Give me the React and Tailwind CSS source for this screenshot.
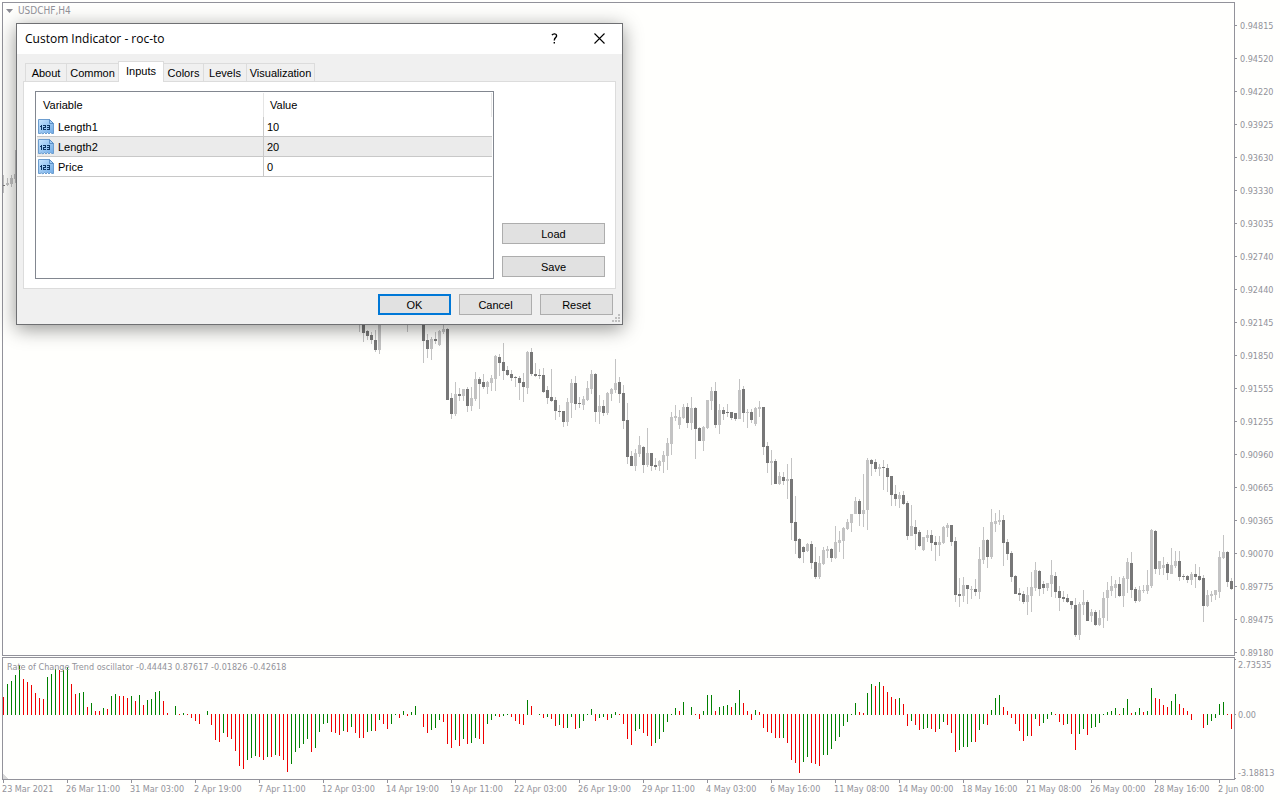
const CANDLES = `
3 175 185 186 193 d|7 178 183 185 186 l|11 175 178 184 187 l|15 150 174 179 183 l
359 318 320 325 332 d|363 318 320 333 342 d|367 330 331 336 340 d|371 332 335 340 344 d|375 330 340 350 352 d|379 318 320 350 354 l
407 318 320 322 332 l|423 318 320 341 363 d|427 334 340 349 358 d|431 337 339 349 360 l|435 332 339 341 344 d|439 330 331 345 346 l
443 324 329 332 334 l|447 328 329 400 400 d|451 393 398 414 419 d|455 382 394 414 416 l|459 388 394 396 401 d|463 389 389 396 401 l
467 387 389 406 412 d|471 387 398 406 411 l|475 372 379 399 401 l|479 377 379 384 409 d|483 374 382 387 389 d|487 381 382 387 394 l
491 375 378 383 391 l|495 355 356 379 391 l|499 354 357 363 376 d|503 343 362 371 380 d|507 366 370 375 376 d|511 370 374 378 381 d
515 376 377 378 387 d|519 376 378 383 400 d|523 373 382 387 402 d|527 351 352 388 394 l|531 348 352 374 376 d|535 363 374 376 377 d
539 369 375 376 379 d|543 368 375 392 393 d|547 386 390 398 404 d|551 369 397 401 402 d|555 397 400 411 420 d|559 405 411 412 417 d
563 411 411 422 427 d|567 398 402 422 426 l|571 379 383 403 418 l|575 376 383 404 410 d|579 397 403 404 408 d|583 396 399 405 410 l
587 381 388 400 401 l|591 370 374 389 394 l|595 373 374 412 422 d|599 395 406 412 424 l|603 400 406 413 416 d|607 392 393 413 415 l
611 388 389 394 401 l|615 359 383 390 393 l|619 377 382 394 403 d|623 385 393 421 429 d|627 403 420 457 464 d|631 451 456 466 466 d
635 449 453 466 471 l|639 436 445 454 457 l|643 446 447 465 473 d|647 428 453 465 467 l|651 453 453 466 471 d|655 458 465 467 470 d
659 460 461 466 471 l|663 451 455 462 473 l|667 438 443 456 470 l|671 412 417 444 455 l|675 405 416 418 421 l|679 410 417 425 429 l
683 404 407 418 419 l|687 403 407 423 428 d|691 397 408 423 430 l|695 407 408 429 459 d|699 427 428 441 441 d|703 426 427 441 451 l
707 400 400 428 429 l|711 387 391 401 410 l|715 382 391 425 428 d|719 404 410 425 434 l|723 407 410 414 420 d|727 404 412 413 417 d
731 412 412 418 420 d|735 413 413 419 421 d|739 379 390 419 419 l|743 386 389 413 422 d|747 409 412 413 428 l|751 409 412 420 423 d
755 407 408 424 426 l|759 401 407 409 417 l|763 407 407 447 455 d|767 442 446 463 473 d|771 450 461 463 485 l|775 459 461 484 484 d
779 472 476 484 485 l|783 472 477 481 485 d|787 464 479 481 499 l|791 458 479 523 540 d|795 496 522 541 554 d|799 538 539 558 559 d
803 546 547 552 563 d|807 543 544 551 552 l|811 541 544 563 569 d|815 547 562 577 579 d|819 556 563 577 579 l|823 547 550 564 565 l
827 546 549 551 558 l|831 548 549 558 562 d|835 526 542 558 559 l|839 531 540 543 552 l|843 527 528 541 559 l|847 519 522 529 530 l
851 514 514 523 532 l|855 497 501 514 514 l|859 499 501 514 526 d|863 474 510 514 527 l|867 458 460 510 530 l|871 459 460 464 476 d
875 459 462 469 472 d|879 464 467 469 476 l|883 460 467 468 490 d|887 464 468 477 492 d|891 476 476 495 506 d|895 485 494 499 506 d
899 492 495 499 508 l|903 491 495 504 505 d|907 501 503 536 540 d|911 505 526 536 536 l|915 520 527 534 550 d|919 530 532 546 547 d
923 537 537 550 551 l|927 530 535 538 542 l|931 530 535 543 551 d|935 536 542 545 561 d|939 536 542 545 556 l|943 526 527 543 544 l
947 523 525 528 537 l|951 525 525 542 546 d|955 537 541 595 602 d|959 578 594 596 607 d|963 577 585 596 602 l|967 585 585 589 604 d
971 586 589 590 599 l|975 579 589 592 596 d|979 547 559 592 599 l|983 527 540 560 564 l|987 539 540 557 568 d|991 509 522 557 559 l
995 513 521 524 532 l|999 510 520 522 525 l|1003 515 520 543 566 d|1007 539 542 554 560 d|1011 551 553 577 582 d|1015 575 576 594 594 d
1019 588 593 595 601 d|1023 591 594 602 604 d|1027 587 595 602 615 l|1031 572 587 596 612 l|1035 562 570 588 591 l|1039 570 571 589 596 d
1043 581 584 588 594 d|1047 583 583 588 591 l|1051 560 575 584 597 l|1055 572 576 592 598 d|1059 586 591 598 611 d|1063 591 597 599 602 d
1067 594 598 602 603 d|1071 601 601 605 609 d|1075 598 605 635 637 d|1079 602 604 635 640 l|1083 590 602 605 615 l|1087 600 602 621 621 d
1091 609 612 616 622 l|1095 610 612 625 626 d|1099 610 618 625 626 l|1103 592 598 618 628 l|1107 582 590 598 621 l|1111 576 586 591 596 l
1115 580 584 588 598 l|1119 577 584 596 597 d|1123 576 578 596 607 l|1127 558 562 579 593 l|1131 552 563 590 598 d|1135 587 589 601 603 d
1139 586 590 601 602 l|1143 585 590 591 593 l|1147 570 585 591 594 l|1151 529 530 586 588 l|1155 530 531 569 574 d|1159 561 561 569 575 l
1163 557 565 568 575 l|1167 562 564 573 580 d|1171 548 565 574 574 l|1175 551 561 566 568 l|1179 551 561 577 581 d|1183 574 576 577 580 d
1187 575 576 580 583 d|1191 572 574 580 585 l|1195 564 574 577 588 d|1199 567 576 580 581 d|1203 575 578 606 622 d|1207 590 595 606 607 l
1211 591 594 596 602 l|1215 590 590 595 600 l|1219 551 557 592 598 l|1223 535 552 558 559 l|1227 551 552 582 587 d|1231 578 581 589 590 d
`
  .trim()
  .split(/[|\n]/)
  .map((row) => {
    const [x, high, top, bottom, low, tone] = row.trim().split(" ");
    return { x: +x, high: +high, top: +top, bottom: +bottom, low: +low, dark: tone === "d" };
  });

// One entry per bar: the y of the bar's end and its colour, "-" for a gap.
const BARS = `
697R 684G 681G 675G 665G 679R 682R 685R 693R 698R 699R 677G 674G 669G 670R 670G 667G 684R 694R 693G
692G 707R 703G 711R 711R 708G 709R 696G 694G 696R 696R 698R 696G 701R 695G 705R 700G 699G 692G 691G
701R 713R - 706G 714R 713G 714R 718R 721R 724R - 711G 725R 740R 742R 733G 737R 739R 751R 766R
769R 760G 758G 756G 757R 760R 757G 757R 755G 756R 760R 772R 764G 752G 748G 744G 739G 752R 748G 732G
724G 723G 732R 733R 735R 731G 732R 727G 733R 738R 738R 732G 731G 731R 720G 724R 729R 724G 714G 718R
711G 716R 712G 706G - 727R 733R 730G 728G 720G 722R 744R 748R 740G 746R 739G 744R 743G 738G 739R
744R 724G 720G 716G 717R 716G 714G 717R 721R 724R 725R 700G 706R - 714G 718R 717G 719R 726R 725G
728R 728G 717G 729R 728G 721G 714G 709G 721R 718G 717G 720R 718G 712G 714R 724R 739R 745R 731G 729G
733R 736R 746R 743G 739G 732G 722G 714G 708G 711R 702G - 707G 714R 719R 711G 695G 695G 711R 707G
706G 705G 707R 703G 690G 703R 711R 720R 710G 712R 728R 732R 733R 738R 738R 738G 743R 760R 763R 773R
762G 757G 763R 764R 766R 755G 755G 749G 741G 737G 726G 722G 714G 703G 712R 713R 693G 684G 686R 682G
686R 692R 697R 699R 698G 704R 726R 721G 725R 730R 729G 728G 729R 732R 729G 722G 725R 733R 752R 750G
747G 747G 742G 742R 730G 724G 725R 710G 698G 695G 707R 711R 718R 724R 731R 741R 736G 736R 719G 726R
723G 719G 712G 714R 722R 725R 724G 734R 750R 734G 729G 735R 728G 727G 723G 714G 712G 711G 708G 714R
708G 699G 713R 712G 708G 712R 711G 688G 698R 699R 705R 707R 701G 694G 704R 708R 711R 720R - -
728R 725G 721G 718G 704G 702G 714R 729R
`
  .trim()
  .split(/\s+/);

const PRICES = [
  "0.94815", "0.94520", "0.94220", "0.93925", "0.93630", "0.93330", "0.93035", "0.92740", "0.92440", "0.92145",
  "0.91850", "0.91555", "0.91255", "0.90960", "0.90665", "0.90365", "0.90070", "0.89775", "0.89475", "0.89180",
];

const DATES = [
  "23 Mar 2021", "26 Mar 11:00", "31 Mar 03:00", "2 Apr 19:00", "7 Apr 11:00", "12 Apr 03:00", "14 Apr 19:00",
  "19 Apr 11:00", "22 Apr 03:00", "26 Apr 19:00", "29 Apr 11:00", "4 May 03:00", "6 May 16:00", "11 May 08:00",
  "14 May 00:00", "18 May 16:00", "21 May 08:00", "26 May 00:00", "28 May 16:00", "2 Jun 08:00",
];

const TABS = [
  { name: "About", style: "w-[42px] border-l border-r" },
  { name: "Common", style: "w-[51px]" },
  { name: "Inputs", style: "w-[46px]" },
  { name: "Colors", style: "w-[40px] border-r" },
  { name: "Levels", style: "w-[43px] border-r" },
  { name: "Visualization", style: "w-[68px] border-r" },
];

const VARIABLES = [
  { name: "Length1", value: "10" },
  { name: "Length2", value: "20", active: true },
  { name: "Price", value: "0" },
];

// Both plots keep page coordinates; the group shift takes off the frame's own corner.
function PriceChart() {
  return (
    <svg className="block h-full w-full" shapeRendering="crispEdges" aria-hidden="true">
      <g transform="translate(-3 -3)">
        {CANDLES.map((c) => (
          <g key={c.x}>
            <rect x={c.x} y={c.high} width="1" height={c.low - c.high} fill="#c3c3c3" />
            <rect x={c.x - 1} y={c.top} width="3" height={c.bottom - c.top} fill={c.dark ? "#777777" : "#c3c3c3"} />
          </g>
        ))}
      </g>
    </svg>
  );
}

function Oscillator() {
  return (
    <svg className="block h-full w-full" shapeRendering="crispEdges" aria-hidden="true">
      <g transform="translate(-3 -658)">
        {BARS.map((bar, i) => {
          if (bar === "-") return null;
          const end = parseInt(bar, 10);
          const top = Math.min(end, 714);
          return (
            <rect
              key={i}
              x={3 + 4 * i}
              y={top}
              width="1"
              height={Math.max(end, 715) - top}
              fill={bar.endsWith("G") ? "#008000" : "#ee0000"}
            />
          );
        })}
        <path d="M3 774L8 779H3Z" fill="#d8d8d8" />
      </g>
    </svg>
  );
}

function ValueIcon() {
  return (
    <svg className="size-4 shrink-0" viewBox="0 0 16 16" aria-hidden="true">
      <defs>
        <linearGradient id="sheet" x1="0" y1="0" x2="1" y2="1">
          <stop offset="0" stopColor="#c8e4fd" />
          <stop offset="1" stopColor="#6faae6" />
        </linearGradient>
      </defs>
      <path
        d="M.5 .5H11.5L15.5 4.5V14.5H14L12.5 13.5L11 15L9.5 13.5L8 15L6.5 13.5L5 15L3.5 14L2 14.5H.5Z"
        fill="url(#sheet)"
        stroke="#6c9dcf"
      />
      <path d="M11.5 .5V4.5H15.5Z" fill="#a4cdf4" stroke="#5b8fc6" />
      <path
        d="M3 6h1v5H3zM2 7h1v1H2zM5 6h3v3H6v1h2v1H5V8h2V7H5zM9 6h3v5H9v-1h2V9H9V8h2V7H9z"
        fill="#0d3461"
        shapeRendering="crispEdges"
      />
    </svg>
  );
}

function PushButton({ children, className }) {
  return (
    <button type="button" className={`h-[21px] bg-[#e1e1e1] pt-px text-center leading-4 ${className}`}>
      {children}
    </button>
  );
}

function Dialog() {
  return (
    <section
      role="dialog"
      aria-labelledby="dialog-title"
      className="absolute top-[23px] left-4 w-[607px] border border-[#6f7073] bg-[#f0f0f0] font-['Liberation_Sans',Arial,sans-serif] text-[11px] text-black shadow-[0_4px_18px_rgba(0,0,0,0.42)]"
    >
      <header className="flex h-[30px] items-center bg-white pl-2">
        <h1 id="dialog-title" className="flex-1 font-['Open_Sans','Segoe_UI',sans-serif] text-[12px]">
          Custom Indicator - roc-to
        </h1>
        <button type="button" aria-label="Help" className="flex h-full w-11 items-center justify-center pb-0.5">
          <svg className="h-[11px] w-[7px]" viewBox="0 0 7 11" fill="none" stroke="#000" strokeWidth="1.4">
            <path d="M1 2.2C2 .4 5.6 .3 5.6 2.7C5.6 4.6 3.3 4.7 3.3 7.4M3.3 8.9V10.5" />
          </svg>
        </button>
        <button type="button" aria-label="Close" className="flex h-full w-[46px] items-center justify-center pb-0.5">
          <svg className="size-[11px]" viewBox="0 0 11 11" fill="none" stroke="#000" strokeWidth="1.1">
            <path d="M.5 .5L10.5 10.5M10.5 .5L.5 10.5" />
          </svg>
        </button>
      </header>

      <div role="tablist" className="flex h-[27px] items-end pl-2">
        {TABS.map((tab) =>
          tab.name === "Inputs" ? (
            <button
              key={tab.name}
              type="button"
              role="tab"
              aria-selected="true"
              className={`relative z-10 -mb-px h-[21px] border-x border-t border-[#dcdcdc] bg-white pb-0.5 ${tab.style}`}
            >
              {tab.name}
            </button>
          ) : (
            <button
              key={tab.name}
              type="button"
              role="tab"
              aria-selected="false"
              className={`h-[18px] border-t border-[#dcdcdc] pt-px whitespace-nowrap ${tab.style}`}
            >
              {tab.name}
            </button>
          )
        )}
      </div>

      <div role="tabpanel" className="mx-1.5 flex gap-2 border border-[#dcdcdc] bg-white py-[9px] pr-[10px] pl-[11px]">
        <div className="h-[188px] flex-1 border border-[#828790] p-px">
          <table className="w-full table-fixed border-separate border-spacing-0 text-left">
            <thead>
              <tr className="h-6">
                <th className="w-[226px] pl-1.5 font-normal">Variable</th>
                <th className="border-r border-l border-[#e5e5e5] pl-1.5 font-normal">Value</th>
              </tr>
            </thead>
            <tbody>
              {VARIABLES.map((v) => (
                <tr key={v.name} className={v.active ? "h-5 bg-[#ebebeb]" : "h-5"}>
                  <td className="border-b border-[#c8c8c8] p-0 pl-px">
                    <span className="flex items-center gap-1">
                      <ValueIcon />
                      {v.name}
                    </span>
                  </td>
                  <td className="border-b border-l border-[#c8c8c8] p-0 pl-[3px]">{v.value}</td>
                </tr>
              ))}
            </tbody>
          </table>
        </div>
        <div className="flex w-[103px] flex-col justify-end gap-3 pb-0.5">
          <PushButton className="border border-[#adadad]">Load</PushButton>
          <PushButton className="border border-[#adadad]">Save</PushButton>
        </div>
      </div>

      <footer className="flex justify-end gap-2 pt-[5px] pr-[9px] pb-[9px]">
        <PushButton className="w-[73px] border-2 border-[#0078d7]">OK</PushButton>
        <PushButton className="w-[73px] border border-[#adadad]">Cancel</PushButton>
        <PushButton className="w-[73px] border border-[#adadad]">Reset</PushButton>
      </footer>
      <svg className="absolute right-0.5 bottom-0.5 size-2" viewBox="0 0 8 8" fill="#bfbfbf" aria-hidden="true">
        <path d="M6 0h2v2H6zM3 3h2v2H3zM6 3h2v2H6zM0 6h2v2H0zM3 6h2v2H3zM6 6h2v2H6z" />
      </svg>
    </section>
  );
}

export default function App() {
  return (
    <main className="relative flex h-screen flex-col overflow-hidden bg-[#fffffd] pt-0.5 pl-0.5 font-['DejaVu_Sans_Condensed','DejaVu_Sans',Tahoma,sans-serif] text-[9px] leading-3 text-[#92929a]">
      <div className="flex min-h-0 flex-1">
        <div className="flex min-w-0 flex-1 flex-col gap-px">
          <section aria-label="USDCHF,H4" className="relative min-h-0 flex-1 border border-[#92929a]">
            <PriceChart />
            <h2 className="absolute top-0.5 left-[3px] flex items-center gap-1 text-[10px]">
              <svg className="mr-px h-1 w-[7px]" viewBox="0 0 7 4" fill="#8b8b93" aria-hidden="true">
                <path d="M0 0H7L3.5 4Z" />
              </svg>
              USDCHF,H4
            </h2>
          </section>
          <section aria-label="Rate of Change Trend oscillator" className="relative h-[123px] border border-[#92929a]">
            <Oscillator />
            <p className="absolute top-[3px] left-1 whitespace-nowrap">
              Rate of Change Trend oscillator -0.44443 0.87617 -0.01826 -0.42618
            </p>
          </section>
        </div>

        <aside className="flex w-[45px]">
          <svg className="h-full w-[3px] shrink-0" shapeRendering="crispEdges" fill="#92929a" aria-hidden="true">
            {PRICES.map((p, i) => (
              <rect key={p} x="0" y={23 + 33 * i} width="2" height="1" />
            ))}
            <rect x="0" y="657" width="1" height="1" />
            <rect x="0" y="712" width="1" height="1" />
            <rect x="0" y="776" width="1" height="1" />
          </svg>
          <div className="flex flex-col">
            <ol className="flex flex-col gap-[21px] pt-[18px] pl-0.5">
              {PRICES.map((p) => (
                <li key={p} className="h-3">{p}</li>
              ))}
            </ol>
            <p>2.73535</p>
            <p className="pt-[38px]">0.00</p>
            <p className="pt-[46px]">-3.18813</p>
          </div>
        </aside>
      </div>

      <ol className="flex h-5 overflow-hidden">
        {DATES.map((d) => (
          <li key={d} className="w-16 shrink-0 whitespace-nowrap">
            <span className="ml-px block h-[3px] w-px bg-[#92929a]" />
            {d}
          </li>
        ))}
      </ol>

      <Dialog />
    </main>
  );
}
